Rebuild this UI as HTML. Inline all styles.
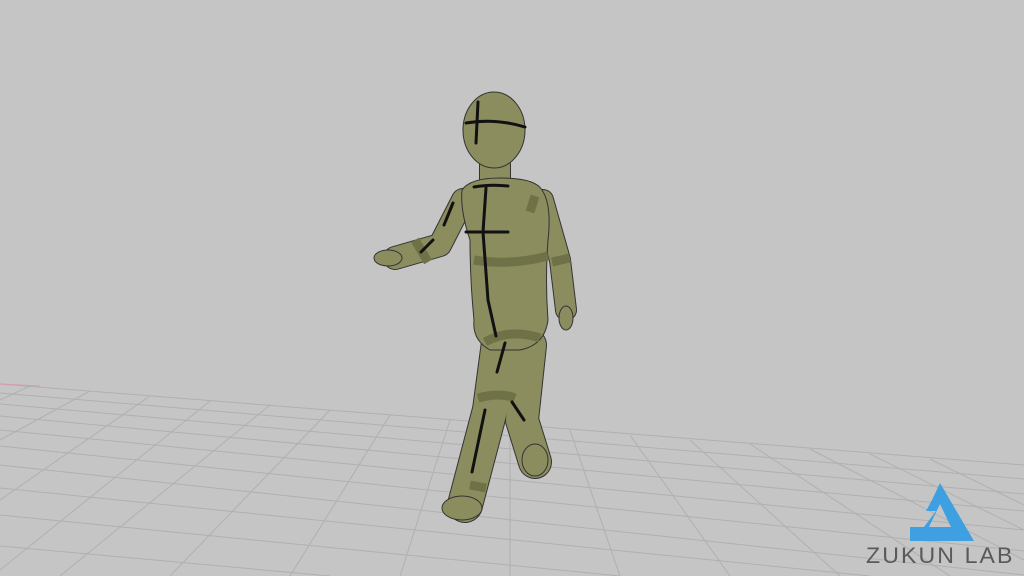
<!DOCTYPE html>
<html><head><style>
html,body{margin:0;padding:0;width:1024px;height:576px;overflow:hidden;background:#c5c5c5}
svg{position:absolute;left:0;top:0}
.logo{position:absolute;left:866px;top:543px;font:22px "Liberation Sans",sans-serif;color:#5a5a5a;letter-spacing:2px;transform:scaleX(1.05);transform-origin:left}
</style></head><body>
<svg width="1024" height="576" viewBox="0 0 1024 576">
<rect width="1024" height="576" fill="#c5c5c5"/>
<g stroke="#b0b0b0" stroke-width="1" fill="none">
<path d="M0,384 L1024,465"/>
<path d="M0,393 L1024,479"/><path d="M0,404 L1024,494"/><path d="M0,416 L1024,511"/>
<path d="M0,430 L1024,530"/><path d="M0,446 L1024,551"/><path d="M0,465 L1024,575"/>
<path d="M0,488 L870,576"/><path d="M0,515 L620,576"/><path d="M0,546 L330,576"/>
<path d="M30,386 L0,400"/><path d="M90,391 L0,440"/><path d="M150,396 L0,500"/><path d="M210,401 L0,570"/>
<path d="M270,405 L60,576"/><path d="M330,410 L170,576"/><path d="M390,415 L290,576"/><path d="M450,420 L400,576"/>
<path d="M510,425 L510,576"/><path d="M570,430 L620,576"/><path d="M630,435 L730,576"/><path d="M690,440 L840,576"/>
<path d="M750,444 L950,576"/><path d="M810,449 L1024,560"/><path d="M870,454 L1024,530"/><path d="M930,459 L1024,505"/>
</g>
<path d="M0,384 L40,386" stroke="#d89aa8" stroke-width="1"/>
<g stroke-linecap="round" stroke-linejoin="round" fill="none">
<g stroke="#333">
<path d="M530,345 L522,420 L535,462" stroke-width="34"/>
<path d="M543,200 L560,260 L566,310" stroke-width="22"/>
<path d="M463,200 L440,245 L395,258" stroke-width="24"/>
<path d="M500,335 L490,410 L465,505" stroke-width="36"/>
<path d="M495,165 L495,180" stroke-width="32"/>
</g>
<g stroke="#8b8d5f">
<path d="M530,345 L522,420 L535,462" stroke-width="32"/>
<path d="M543,200 L560,260 L566,310" stroke-width="20"/>
<path d="M463,200 L440,245 L395,258" stroke-width="22"/>
<path d="M500,335 L490,410 L465,505" stroke-width="34"/>
<path d="M495,165 L495,180" stroke-width="30"/>
</g>
</g>
<path d="M462,190 Q470,178 500,178 Q535,178 542,190 Q552,205 548,240 Q545,280 548,320 Q545,345 520,350 L490,350 Q472,340 474,320 Q470,280 470,240 Q460,210 462,190Z" fill="#8b8d5f" stroke="#333" stroke-width="1"/>
<ellipse cx="494" cy="130" rx="31" ry="38" fill="#8b8d5f" stroke="#333" stroke-width="1"/>
<ellipse cx="566" cy="318" rx="7" ry="12" fill="#8b8d5f" stroke="#333" stroke-width="1"/>
<ellipse cx="388" cy="258" rx="14" ry="8" fill="#8b8d5f" stroke="#333" stroke-width="1"/>
<ellipse cx="462" cy="508" rx="20" ry="12" fill="#8b8d5f" stroke="#333" stroke-width="1"/>
<ellipse cx="535" cy="460" rx="13" ry="16" fill="#8b8d5f" stroke="#333" stroke-width="1"/>
<g stroke="#6e7246" stroke-width="9" fill="none">
<path d="M474,260 Q510,266 548,256"/>
<path d="M485,342 Q510,328 540,338"/>
<path d="M478,398 Q500,392 515,398"/>
<path d="M470,485 L486,488"/>
<path d="M535,196 L530,212"/>
<path d="M415,240 L428,262"/>
<path d="M552,262 L570,258"/>
</g>
<g stroke="#111" stroke-width="3" fill="none" stroke-linecap="round">
<path d="M466,123 Q495,118 525,127"/>
<path d="M478,102 L476,143"/>
<path d="M474,187 Q490,184 508,186"/>
<path d="M486,188 L483,232 L488,300 L496,336"/>
<path d="M466,232 L508,232"/>
<path d="M453,203 L444,225"/>
<path d="M433,240 L421,252"/>
<path d="M505,343 L497,372"/>
<path d="M485,410 L472,472"/>
<path d="M512,402 L524,420"/>
</g>
<path d="M940,483 L974,541 L910,541 L910,527 L924,527 L936,511 L926,511 L932,500 Z M940,504 L951,527 L929,527 Z" fill="#3ea0e0" fill-rule="evenodd"/>
</svg>
<div class="logo">ZUKUN LAB</div>
</body></html>
